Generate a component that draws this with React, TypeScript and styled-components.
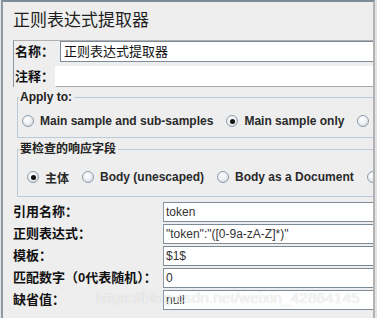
import React from 'react';
import styled, { createGlobalStyle } from 'styled-components';

const GlobalStyle = createGlobalStyle`
    html, body {
        margin: 0;
        padding: 0;
        background-color: #e4e4e4;
    }
`;

const LATIN = `"Liberation Sans", Arial, "Noto Sans CJK SC", sans-serif`;
const CJK = `"Liberation Sans", "Noto Sans CJK SC", sans-serif`;

const Frame = styled.div`
    position: relative;
    box-sizing: border-box;
    width: 374px;
    height: 318px;
    margin-left: 1px;
    overflow: hidden;
    background-color: #eeeeee;
    border-top: 2px solid #7e8c9a;
    border-left: 2px solid #8d99a5;
    border-right: 2px solid #b2b2b2;
    font-family: ${LATIN};
    color: #222;
`;

const Title = styled.div`
    height: 38px;
    line-height: 38px;
    padding-left: 10px;
    font-family: ${CJK};
    font-size: 17px;
    color: #1e1e1e;
`;

const NameBox = styled.div`
    margin-left: 10px;
    border-top: 1px solid #b0b0b0;
    border-left: 1px solid #8a96a2;
    display: flex;
    flex-direction: column;
    gap: 4px;
`;

const NameRow = styled.div`
    display: flex;
    align-items: stretch;
    height: 21px;
`;

const SmallLabel = styled.div<{ $w: number }>`
    width: ${({ $w }) => $w}px;
    flex-shrink: 0;
    padding-left: 1px;
    font-family: ${CJK};
    font-weight: bold;
    font-size: 13px;
    line-height: 21px;
    color: #111;
`;

const NameInput = styled.div<{ $framed?: boolean }>`
    flex: 1;
    box-sizing: border-box;
    background-color: #fff;
    border-top: 1px solid ${({ $framed }) => ($framed ? '#7d8a97' : '#ffffff')};
    border-left: 1px solid ${({ $framed }) => ($framed ? '#7d8a97' : '#ffffff')};
    border-bottom: 1px solid ${({ $framed }) => ($framed ? '#7d8a97' : '#a9a9a9')};
    padding-left: 3px;
    font-family: ${CJK};
    font-size: 13px;
    line-height: 19px;
    color: #111;
`;

const Group = styled.fieldset<{ $top: number; $padTop: number; $padBottom: number }>`
    margin: ${({ $top }) => $top}px 0 0 14px;
    padding: ${({ $padTop }) => $padTop}px 0 ${({ $padBottom }) => $padBottom}px 0;
    width: 420px;
    border: 1px solid #b9cadb;
    border-radius: 0;
`;

const Legend = styled.legend`
    margin-left: 1px;
    padding: 0 2px 0 1px;
    font-family: ${CJK};
    font-weight: bold;
    font-size: 12px;
    line-height: 16px;
    color: #222;
`;

const RadioRow = styled.div<{ $indent: number }>`
    display: flex;
    align-items: center;
    gap: 13px;
    height: 20px;
    padding-left: ${({ $indent }) => $indent}px;
    white-space: nowrap;
`;

const Option = styled.label`
    display: flex;
    align-items: center;
    gap: 6px;
    font-family: ${CJK};
    font-weight: bold;
    font-size: 12px;
    color: #2a2a2a;
`;

const Dot = styled.span<{ $on?: boolean }>`
    position: relative;
    box-sizing: border-box;
    width: 12px;
    height: 12px;
    border-radius: 50%;
    border: 1px solid #8f9cab;
    background: radial-gradient(circle at 40% 35%, #ffffff 0%, #eef1f5 45%, #c6cfd9 100%);
    &::after {
        content: '';
        display: ${({ $on }) => ($on ? 'block' : 'none')};
        position: absolute;
        left: 2.5px;
        top: 2.5px;
        width: 5px;
        height: 5px;
        border-radius: 50%;
        background-color: #111;
    }
`;

const Form = styled.div`
    margin-top: 5px;
    display: grid;
    grid-template-columns: 150px 1fr;
    grid-auto-rows: 20px;
    row-gap: 2px;
    padding-left: 10px;
`;

const FieldLabel = styled.div`
    font-family: ${CJK};
    font-weight: bold;
    font-size: 13px;
    line-height: 20px;
    color: #111;
    white-space: nowrap;
`;

const Field = styled.div`
    box-sizing: border-box;
    background-color: #fff;
    border-top: 1px solid #7d8a97;
    border-bottom: 1px solid #7d8a97;
    border-left: 1px solid #8d99a5;
    padding-left: 2px;
    font-family: ${LATIN};
    font-size: 12px;
    line-height: 18px;
    color: #333;
    white-space: nowrap;
`;

const Watermark = styled.div`
    position: absolute;
    left: 93px;
    top: 287px;
    font-family: ${LATIN};
    font-size: 15.5px;
    color: rgba(255, 255, 255, 0.8);
    text-shadow: 0 0 1px rgba(0, 0, 0, 0.22);
    pointer-events: none;
    white-space: nowrap;
`;

const fields = [
    { label: '引用名称：', value: 'token' },
    { label: '正则表达式：', value: '"token":"([0-9a-zA-Z]*)"' },
    { label: '模板：', value: '$1$' },
    { label: '匹配数字（0代表随机）：', value: '0' },
    { label: '缺省值：', value: 'null' },
];

const App: React.FC = () => {
    return (
        <>
            <GlobalStyle />
            <Frame>
                <Title>正则表达式提取器</Title>
                <NameBox>
                    <NameRow>
                        <SmallLabel $w={45}>名称：</SmallLabel>
                        <NameInput $framed>正则表达式提取器</NameInput>
                    </NameRow>
                    <NameRow>
                        <SmallLabel $w={40}>注释：</SmallLabel>
                        <NameInput />
                    </NameRow>
                </NameBox>

                <Group $top={2} $padTop={6} $padBottom={6}>
                    <Legend>Apply to:</Legend>
                    <RadioRow $indent={4}>
                        <Option><Dot />Main sample and sub-samples</Option>
                        <Option><Dot $on />Main sample only</Option>
                        <Option><Dot />Sub-samples only</Option>
                    </RadioRow>
                </Group>

                <Group $top={3} $padTop={10} $padBottom={9}>
                    <Legend>要检查的响应字段</Legend>
                    <RadioRow $indent={9}>
                        <Option><Dot $on />主体</Option>
                        <Option><Dot />Body (unescaped)</Option>
                        <Option><Dot />Body as a Document</Option>
                        <Option><Dot />信息头</Option>
                    </RadioRow>
                </Group>

                <Form>
                    {fields.map((f) => (
                        <React.Fragment key={f.label}>
                            <FieldLabel>{f.label}</FieldLabel>
                            <Field>{f.value}</Field>
                        </React.Fragment>
                    ))}
                </Form>

                <Watermark>https://blog.csdn.net/weixin_42864145</Watermark>
            </Frame>
        </>
    );
};

export default App;
